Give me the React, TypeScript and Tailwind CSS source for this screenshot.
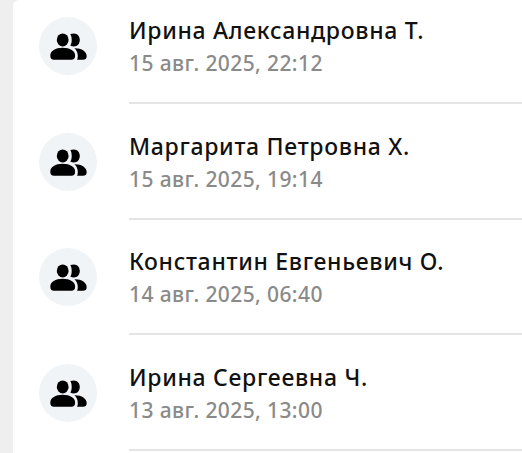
const rows = [
  { name: "Ирина Александровна Т.", date: "15 авг. 2025, 22:12" },
  { name: "Маргарита Петровна Х.", date: "15 авг. 2025, 19:14" },
  { name: "Константин Евгеньевич О.", date: "14 авг. 2025, 06:40" },
  { name: "Ирина Сергеевна Ч.", date: "13 авг. 2025, 13:00" },
];

function PeopleIcon() {
  return (
    <svg viewBox="0 0 58 58" className="size-[58px]" fill="#000">
      <ellipse cx="23.7" cy="22.9" rx="5.9" ry="6.5" />
      <path d="M31.3 17.1C32.4 16.6 33.6 16.4 34.9 16.4C38.3 16.4 40.8 19.2 40.8 22.9S38.3 29.4 34.9 29.4C33.6 29.4 32.4 29.1 31.3 28.5C32.2 27.1 32.7 25.2 32.7 22.9S32.2 18.6 31.3 17.1Z" />
      <path d="M23.7 30.8C31 30.8 36.1 34 36.1 38.5C36.1 41.6 34.9 42.7 32.4 42.7H15C12.5 42.7 11.3 41.6 11.3 38.5C11.3 34 16.4 30.8 23.7 30.8Z" />
      <path d="M35.4 31.2C42.6 31 47.7 34.6 47.7 38.9C47.7 41.6 46.4 42.7 43.9 42.7H38.1C38.6 41.7 38.8 40.4 38.8 38.9C38.8 35.7 37.6 33.2 35.4 31.2Z" />
    </svg>
  );
}

export default function App() {
  return (
    <div className="h-[453px] w-full overflow-hidden bg-[#efefef] pl-[13px] font-['Noto_Sans','Open_Sans',sans-serif]">
      <div className="h-full overflow-hidden rounded-tl-[6px] bg-white">
        {rows.map((row) => (
          <div key={row.date} className="flex h-[115.65px] pl-[25.7px]">
            <div className="mt-[17px] size-[58px] shrink-0 rounded-full bg-[#f1f4f7]">
              <PeopleIcon />
            </div>
            <div className="ml-[32.3px] h-[104px] flex-1 border-b-2 border-[#e4e4e4] pt-[14px] whitespace-nowrap">
              <div className="text-[23px] leading-8 font-medium tracking-[0.7px] text-[#111]">{row.name}</div>
              <div className="text-[21px] leading-[34px] font-medium tracking-[0.4px] text-[#8a8a8a]">{row.date}</div>
            </div>
          </div>
        ))}
      </div>
    </div>
  );
}
